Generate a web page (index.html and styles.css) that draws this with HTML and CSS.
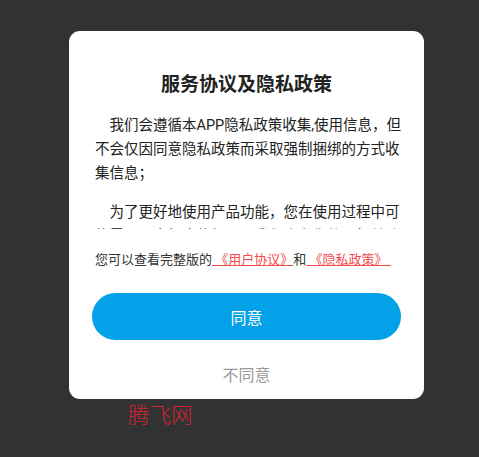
FILE: index.html
```html
<!DOCTYPE html>
<html lang="zh-CN">
<head>
<meta charset="utf-8">
<title>服务协议及隐私政策</title>
<link rel="stylesheet" href="styles.css">
</head>
<body>
<div class="page">
  <div class="card">
    <h1 class="title">服务协议及隐私政策</h1>
    <div class="content">
      <p>我们会遵循本APP隐私政策收集,使用信息，但不会仅因同意隐私政策而采取强制捆绑的方式收集信息；</p>
      <p>为了更好地使用产品功能，您在使用过程中可能需要开启相应的权限，我们会在您使用相关功能时向您申请。</p>
    </div>
    <div class="links">您可以查看完整版的<a class="link" href="#">&nbsp;《用户协议》</a>和<a class="link" href="#">&nbsp;《隐私政策》&nbsp;</a></div>
    <button class="btn-agree" type="button">同意</button>
    <div class="btn-disagree">不同意</div>
  </div>
</div>
<div class="watermark">腾飞网</div>
</body>
</html>
```
FILE: styles.css
```css
html, body {
  margin: 0;
  padding: 0;
}
body {
  background: #313234;
  width: 479px;
  height: 457px;
  overflow: hidden;
  font-family: Roboto, "Noto Sans CJK SC", sans-serif;
  position: relative;
}
.page {
  padding: 31px 0 0 69px;
}
.card {
  width: 355px;
  background: #ffffff;
  border-radius: 11px;
  padding: 41px 0 12px;
  box-sizing: border-box;
  display: flex;
  flex-direction: column;
}
.title {
  margin: 0;
  font-size: 19px;
  line-height: 26px;
  font-weight: bold;
  color: #222;
  text-align: center;
}
.content {
  margin-top: 16px;
  height: 115px;
  overflow: hidden;
  padding: 0 22px 0 26px;
  color: #222;
  font-size: 14.5px;
  line-height: 24px;
}
.content p {
  margin: 0 0 14.5px;
  text-indent: 1em;
}
.links {
  margin-top: 21px;
  padding: 0 0 0 26px;
  font-size: 13px;
  line-height: 20px;
  color: #333;
  white-space: nowrap;
}
.link {
  color: #f24b4b;
  text-decoration: underline;
}
.btn-agree {
  margin: 23px 23px 0;
  height: 47px;
  border: 0;
  border-radius: 24px;
  background: #03a1e7;
  color: #fff;
  font-family: inherit;
  font-size: 16px;
  padding: 0;
}
.btn-disagree {
  margin-top: 25px;
  text-align: center;
  font-size: 16px;
  line-height: 22px;
  color: #9a9a9a;
}
.watermark {
  position: absolute;
  left: 128px;
  top: 403px;
  font-size: 21.5px;
  line-height: 22px;
  color: #d3252d;
  font-family: "Noto Sans CJK SC", sans-serif;
  font-weight: 300;
}
```
